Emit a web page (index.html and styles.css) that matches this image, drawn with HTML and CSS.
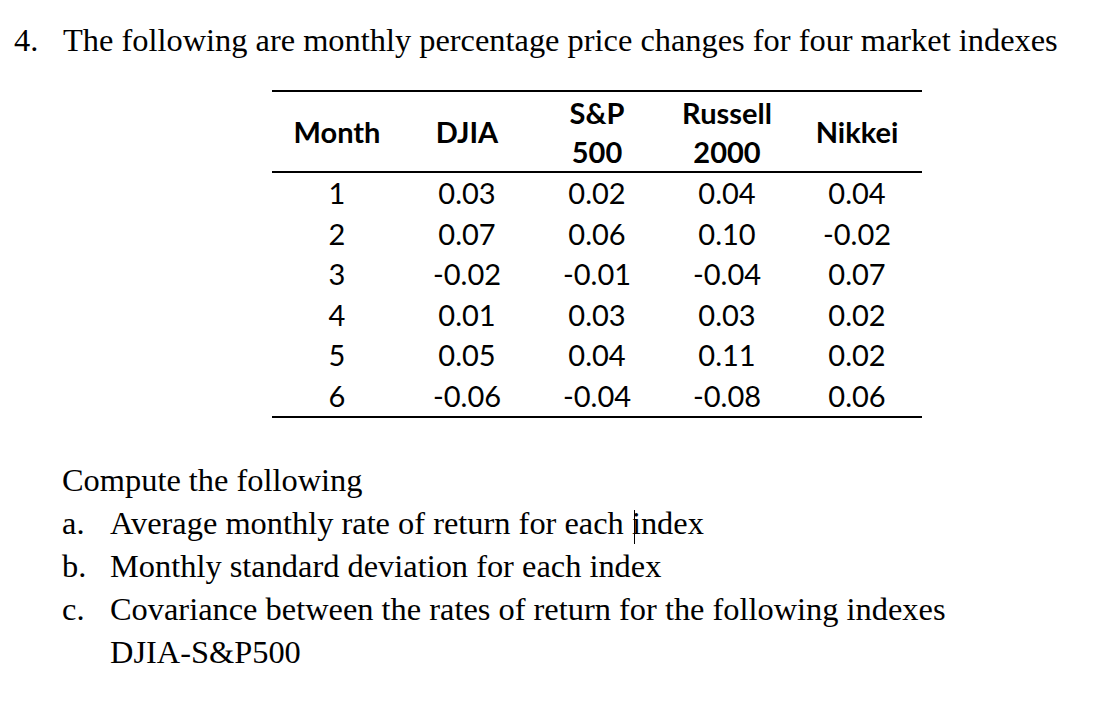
FILE: index.html
```html
<!DOCTYPE html>
<html lang="en">
<head>
<meta charset="utf-8">
<title>Market indexes</title>
<link rel="stylesheet" href="styles.css">
</head>
<body>
<div class="problem">
  <p class="title"><span class="num">4.</span><span>The following are monthly percentage price changes for four market indexes</span></p>

  <table class="data">
    <thead>
      <tr>
        <th>Month</th>
        <th>DJIA</th>
        <th>S&amp;P<br>500</th>
        <th>Russell<br>2000</th>
        <th>Nikkei</th>
      </tr>
    </thead>
    <tbody>
      <tr><td>1</td><td>0.03</td><td>0.02</td><td>0.04</td><td>0.04</td></tr>
      <tr><td>2</td><td>0.07</td><td>0.06</td><td>0.10</td><td>-0.02</td></tr>
      <tr><td>3</td><td>-0.02</td><td>-0.01</td><td>-0.04</td><td>0.07</td></tr>
      <tr><td>4</td><td>0.01</td><td>0.03</td><td>0.03</td><td>0.02</td></tr>
      <tr><td>5</td><td>0.05</td><td>0.04</td><td>0.11</td><td>0.02</td></tr>
      <tr><td>6</td><td>-0.06</td><td>-0.04</td><td>-0.08</td><td>0.06</td></tr>
    </tbody>
  </table>

  <div class="tasks">
    <p class="lead">Compute the following</p>
    <div class="item"><span class="mark">a.</span><span>Average monthly rate of return for each <span class="caret-host"><span class="caret"></span>i</span>ndex</span></div>
    <div class="item"><span class="mark">b.</span><span>Monthly standard deviation for each index</span></div>
    <div class="item"><span class="mark">c.</span><span>Covariance between the rates of return for the following indexes<br>DJIA-S&amp;P500</span></div>
  </div>
</div>
</body>
</html>
```

FILE: styles.css
```css
html, body {
  background: #ffffff;
}

body {
  margin: 0;
  color: #000000;
  font-family: "Liberation Serif", "Times New Roman", serif;
}

.problem {
  padding: 19px 0 0 14px;
}

.title {
  display: flex;
  margin: 0;
  font-size: 32.4px;
  line-height: 43px;
}

.num {
  width: 49px;
  flex: none;
}

.data {
  margin: 28px 0 0 258px;
  width: 650px;
  table-layout: fixed;
  border-collapse: collapse;
  font-family: Lato, "Open Sans", sans-serif;
  font-size: 29px;
  color: #000000;
}

.data th {
  height: 79px;
  padding: 0;
  font-weight: 700;
  line-height: 39px;
  text-align: center;
  vertical-align: middle;
  border-top: 2px solid #000000;
  border-bottom: 2px solid #000000;
}

.data td {
  height: 40.5px;
  padding: 0;
  line-height: 40.5px;
  text-align: center;
  vertical-align: middle;
}

.data tbody tr:last-child td {
  border-bottom: 2px solid #000000;
}

.tasks {
  margin-top: 41px;
  padding-left: 48px;
  font-size: 32.4px;
  line-height: 43px;
}

.lead {
  margin: 0;
}

.item {
  display: flex;
}

.mark {
  width: 48px;
  flex: none;
}

.caret-host {
  position: relative;
}

.caret {
  position: absolute;
  left: 2px;
  top: 5px;
  width: 1px;
  height: 34px;
  background: #000000;
}
```
